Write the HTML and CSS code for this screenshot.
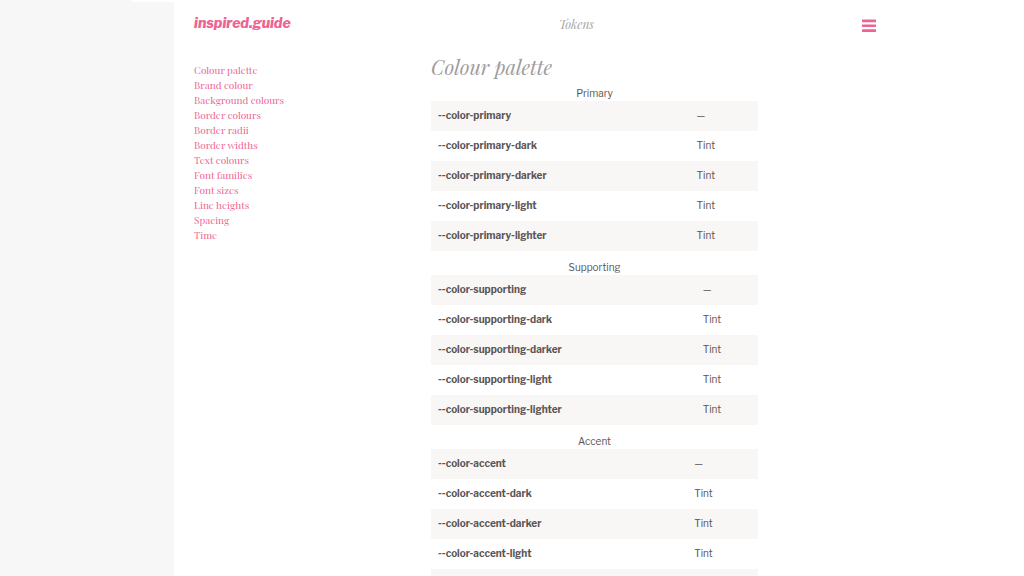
FILE: index.html
```
<!DOCTYPE html>
<html lang="en">
<head>
  <meta charset="UTF-8">
  <meta name="viewport" content="width=device-width, initial-scale=1.0">
  <title>Tokens - inspired.guide</title>
  <link rel="stylesheet" href="styles.css">
</head>
<body>
  <div class="layout">
    <div class="gutter"><div class="gutter-tab"></div></div>

    <div class="page">
      <header class="header">
        <a class="logo" href="#">inspired.guide</a>
        <p class="section-name">Tokens</p>
        <button class="menu-button" type="button" aria-label="Menu">
          <svg width="14" height="14" viewBox="0 0 14 14" aria-hidden="true">
            <g fill="currentColor">
              <rect y="0.5" width="14" height="2.7" rx="0.5"/>
              <rect y="5.4" width="14" height="2.7" rx="0.5"/>
              <rect y="10.3" width="14" height="2.7" rx="0.5"/>
            </g>
          </svg>
        </button>
      </header>

      <div class="columns">
        <nav class="toc">
          <ul>
            <li><a href="#colour-palette">Colour palette</a></li>
            <li><a href="#">Brand colour</a></li>
            <li><a href="#">Background colours</a></li>
            <li><a href="#">Border colours</a></li>
            <li><a href="#">Border radii</a></li>
            <li><a href="#">Border widths</a></li>
            <li><a href="#">Text colours</a></li>
            <li><a href="#">Font families</a></li>
            <li><a href="#">Font sizes</a></li>
            <li><a href="#">Line heights</a></li>
            <li><a href="#">Spacing</a></li>
            <li><a href="#">Time</a></li>
          </ul>
        </nav>

        <main class="content">
          <h1 id="colour-palette">Colour palette</h1>

          <table class="tokens">
            <caption>Primary</caption>
            <tbody>
              <tr><th scope="row">--color-primary</th><td>—</td></tr>
              <tr><th scope="row">--color-primary-dark</th><td>Tint</td></tr>
              <tr><th scope="row">--color-primary-darker</th><td>Tint</td></tr>
              <tr><th scope="row">--color-primary-light</th><td>Tint</td></tr>
              <tr><th scope="row">--color-primary-lighter</th><td>Tint</td></tr>
            </tbody>
          </table>

          <table class="tokens">
            <caption>Supporting</caption>
            <tbody>
              <tr><th scope="row">--color-supporting</th><td>—</td></tr>
              <tr><th scope="row">--color-supporting-dark</th><td>Tint</td></tr>
              <tr><th scope="row">--color-supporting-darker</th><td>Tint</td></tr>
              <tr><th scope="row">--color-supporting-light</th><td>Tint</td></tr>
              <tr><th scope="row">--color-supporting-lighter</th><td>Tint</td></tr>
            </tbody>
          </table>

          <table class="tokens">
            <caption>Accent</caption>
            <tbody>
              <tr><th scope="row">--color-accent</th><td>—</td></tr>
              <tr><th scope="row">--color-accent-dark</th><td>Tint</td></tr>
              <tr><th scope="row">--color-accent-darker</th><td>Tint</td></tr>
              <tr><th scope="row">--color-accent-light</th><td>Tint</td></tr>
              <tr><th scope="row">--color-accent-lighter</th><td>Tint</td></tr>
            </tbody>
          </table>
        </main>
      </div>
    </div>
  </div>
</body>
</html>
```
FILE: styles.css
```
* { box-sizing: border-box; }
html {
  scrollbar-width: none;
}
body {
  margin: 0;
  background: #fff;
  color: #5c5555;
  font-family: "Libre Franklin", "Liberation Sans", sans-serif;
  font-size: 10px;
  line-height: 14px;
}
a {
  color: #ee6392;
  text-decoration: none;
}
a:hover {
  text-decoration: underline;
}
.layout {
  display: grid;
  grid-template-columns: 17% 1fr;
  min-height: 100vh;
}
.gutter {
  background: #f7f7f7;
}
.gutter-tab {
  width: 24%;
  height: 2px;
  margin-left: auto;
  background: #fff;
}
.page {
  padding: 16px 148px 0 20px;
}

/* Header */
.header {
  display: flex;
  align-items: flex-start;
  justify-content: space-between;
  height: 20px;
}
.logo {
  font-size: 14px;
  font-style: italic;
  font-weight: 800;
  line-height: 14px;
}
.section-name {
  margin: 0;
  color: #a8a4a4;
  font-family: "Playfair Display", "Liberation Serif", serif;
  font-size: 12px;
  font-style: italic;
  line-height: 16px;
}
.menu-button {
  display: block;
  align-self: center;
  padding: 0;
  border: 0;
  background: none;
  color: #ee6392;
  cursor: pointer;
}
.menu-button svg {
  display: block;
}

/* Contents list and tokens */
.columns {
  display: grid;
  grid-template-columns: 237fr 327fr 118fr;
  padding-top: 20px;
}
.toc ul {
  margin: 0;
  padding: 7px 0 0;
  list-style: none;
}
.toc li {
  font-family: "Playfair Display", "Liberation Serif", serif;
  font-size: 10px;
  line-height: 15px;
}
.content h1 {
  margin: 0;
  color: #a09b9b;
  font-family: "Playfair Display", "Liberation Serif", serif;
  font-size: 20px;
  font-style: italic;
  font-weight: 400;
  line-height: 21px;
}
.tokens {
  width: 100%;
  border-collapse: collapse;
}
.tokens caption {
  height: 24px;
  padding-top: 9px;
}
.tokens th,
.tokens td {
  height: 30px;
  padding: 0 7px 2px;
  text-align: left;
}
.tokens tr:nth-child(odd) {
  background: #f8f7f6;
}
```
